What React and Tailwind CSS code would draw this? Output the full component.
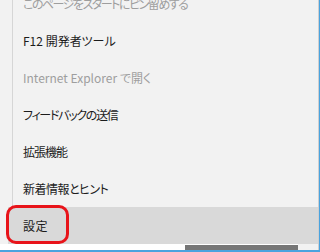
import React from "react";

const items = [
  { t: "このページをスタートにピン留めする", dis: true, tr: "tracking-[-1.5px]" },
  { t: "F12 開発者ツール", tr: "tracking-[0px]" },
  { t: "Internet Explorer で開く", dis: true, tr: "tracking-[0px]" },
  { t: "フィードバックの送信", tr: "tracking-[-1.3px]" },
  { t: "拡張機能", tr: "tracking-[-1px]" },
  { t: "新着情報とヒント", tr: "tracking-[-0.5px]" },
  { t: "設定", active: true, tr: "tracking-[0.5px]" },
];

export default function App() {
  return (
    <div
      className="relative w-[320px] h-[252px] overflow-hidden bg-[#f2f2f2] flex flex-col [font-feature-settings:'palt']"
      style={{ fontFamily: '"Noto Sans CJK JP", "Noto Sans", sans-serif' }}
    >
      <div className="flex h-[250px]">
        <div className="flex-1 flex flex-col">
          <div className="flex h-[244px] overflow-hidden">
            <div className="w-[12px] shrink-0" />
            <div className="flex-1 border-l border-[#d6d6d6] flex flex-col">
              <div className="-mt-[15px] flex flex-col">
                {items.map((it, i) => (
                  <div
                    key={i}
                    className={
                      "h-[37px] shrink-0 flex items-center pl-[10px] text-[12px] whitespace-nowrap " +
                      it.tr +
                      " " +
                      (it.active ? "bg-[#d9d9d9] -ml-[5px] pl-[15px] " : "") +
                      (it.dis ? "text-[#9e9e9e]" : "text-[#1c1c1c]")
                    }
                  >
                    {it.t}
                  </div>
                ))}
              </div>
            </div>
          </div>
          <div className="relative h-[6px] bg-white overflow-hidden">
            <div className="absolute left-[27px] top-[2px] text-[22px] leading-[22px] text-[#333] tracking-[2px] whitespace-nowrap">
              22 222 2 4
            </div>
            <div className="absolute left-[185px] top-[1px] w-[113px] h-[5px] bg-[#767676]" />
            <div className="absolute left-[298px] top-0 right-0 h-[6px] bg-[#f2f2f2]" />
          </div>
        </div>
        <div className="w-[1px] bg-[#cfcfcf]" />
        <div className="w-[1px] bg-[#4aa3df]" />
      </div>
      <div className="h-[2px] bg-[#4aa3df]" />
      <div className="absolute left-[6px] top-[205px] w-[63px] h-[39px] border-[3px] border-[#e8141a] rounded-[10px]" />
    </div>
  );
}
